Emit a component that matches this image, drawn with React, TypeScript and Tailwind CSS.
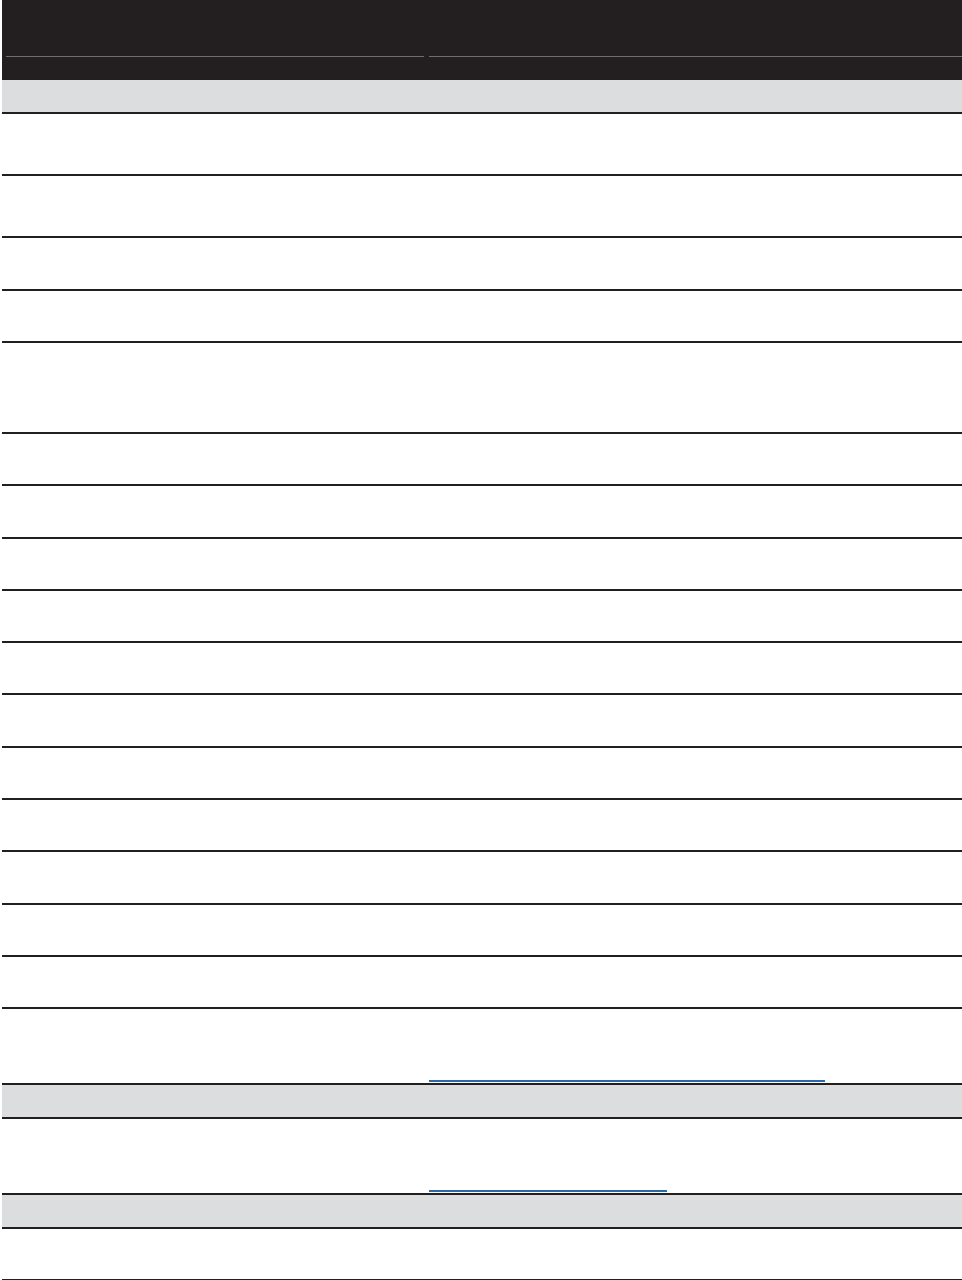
import React from "react";

type Row = { h: string; gray?: boolean; underline?: string };

// every row carries its own 2px rule at the bottom
const rows: Row[] = [
  { h: "h-[34px]", gray: true },
  { h: "h-[62px]" },
  { h: "h-[62px]" },
  { h: "h-[53px]" },
  { h: "h-[52px]" },
  { h: "h-[91px]" },
  { h: "h-[52px]" },
  { h: "h-[53px]" },
  { h: "h-[52px]" },
  { h: "h-[52px]" },
  { h: "h-[52px]" },
  { h: "h-[53px]" },
  { h: "h-[52px]" },
  { h: "h-[52px]" },
  { h: "h-[53px]" },
  { h: "h-[52px]" },
  { h: "h-[52px]" },
  { h: "h-[76px]", underline: "w-[396px]" },
  { h: "h-[34px]", gray: true },
  { h: "h-[76px]", underline: "w-[238px]" },
  { h: "h-[34px]", gray: true },
  { h: "h-[52px]" },
];

export default function App() {
  return (
    <div className="w-[962px] min-h-[1280px] bg-white pl-[2px] font-['Liberation_Sans',sans-serif] overflow-hidden">
      <div className="h-[80px] bg-[#231f20] pt-[56px] flex">
        <div className="ml-[4px] w-[418px] h-px bg-[#6d6e71]" />
        <div className="ml-[5px] flex-1 h-px bg-[#6d6e71]" />
      </div>
      {rows.map((r, i) => (
        <div
          key={i}
          className={`${r.h} grid grid-cols-[427px_1fr] border-b-2 border-[#231f20] ${r.gray ? "bg-[#dcdddf]" : "bg-white"}`}
        >
          <div />
          <div className="flex items-end pb-px">
            {r.underline && <div className={`${r.underline} h-[2px] bg-[#2a6aa8]`} />}
          </div>
        </div>
      ))}
    </div>
  );
}
